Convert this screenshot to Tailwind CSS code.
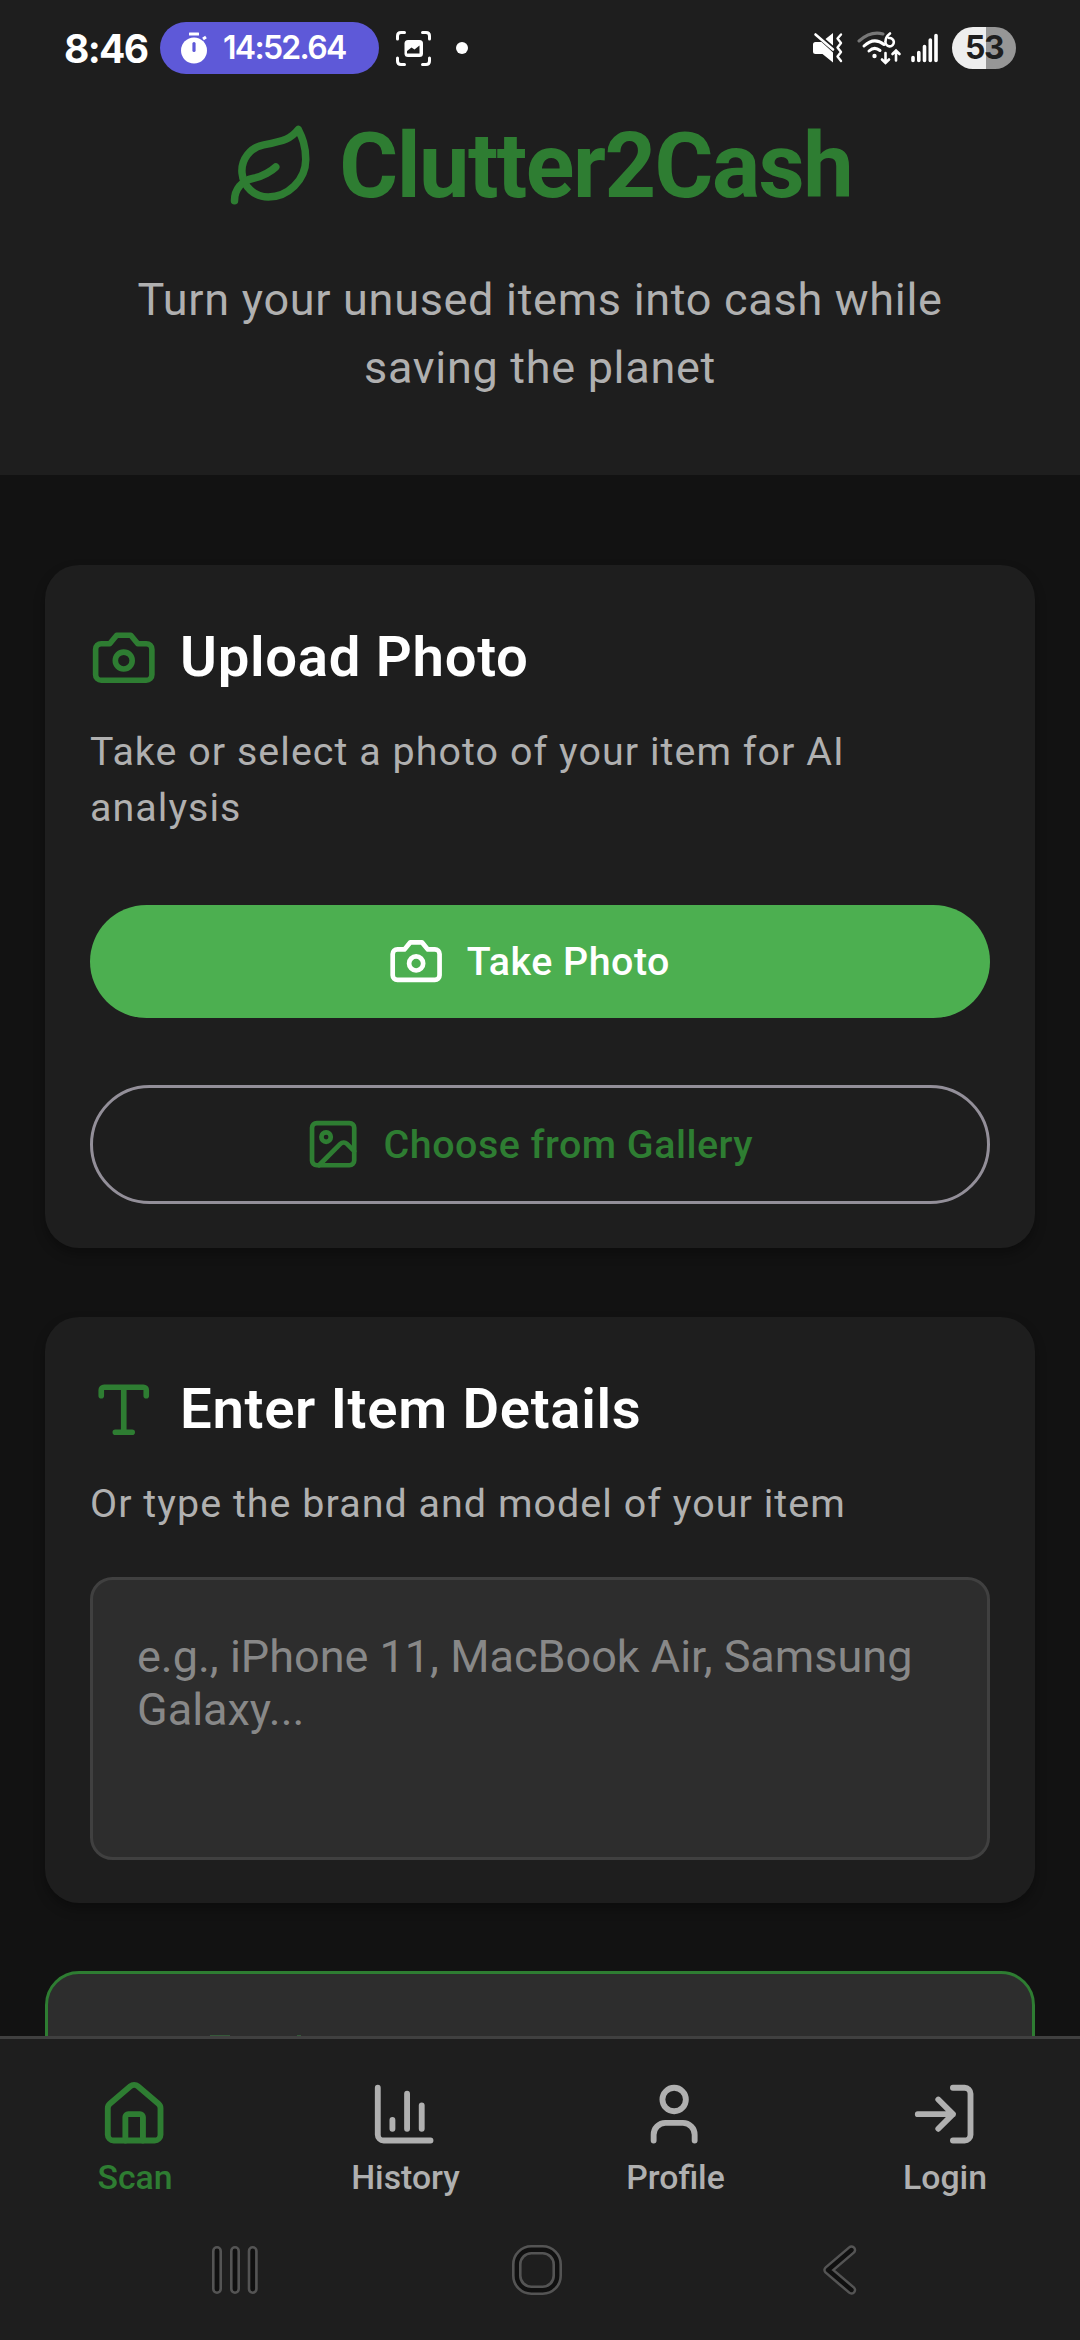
<!DOCTYPE html>
<html lang="en">
<head>
<meta charset="utf-8">
<title>Clutter2Cash</title>
<script src="https://cdn.jsdelivr.net/npm/@tailwindcss/browser@4"></script>
</head>
<body class="bg-[#121212]">
<div class="flex h-[2340px] w-[1080px] flex-col overflow-hidden bg-[#121212] font-['Roboto',sans-serif] text-[#b0b0b0]">

  <header class="flex h-[475px] shrink-0 flex-col items-center bg-[#1e1e1e]">
    <!-- Status bar -->
    <div class="flex h-[96px] w-full items-center pl-[64px] pr-[64px] font-['Inter',sans-serif] text-white">
      <span class="w-[96px] whitespace-nowrap text-[39px] font-bold leading-none tracking-[-1.7px]">8:46</span>
      <div class="flex h-[52px] w-[219px] items-center rounded-full bg-[#5e59d8] pl-[20px]">
        <svg class="h-[32px] w-[28px]" viewBox="0 0 28 32" fill="#fff"><circle cx="14" cy="18.500" r="13"/><rect x="9" y="0.500" width="10" height="3" rx="0.500"/><path d="M23 7l3-2" stroke="#fff" stroke-width="3"/><path d="M14 11.500v7" stroke="#5e59d8" stroke-width="3.200" stroke-linecap="round"/></svg>
        <span class="ml-[15px] whitespace-nowrap text-[32px] font-semibold leading-none tracking-[-1.7px]">14:52.64</span>
      </div>
      <svg class="ml-[17px] h-[35px] w-[35px]" viewBox="0 0 35 35" fill="none" stroke="#fff" stroke-width="3" stroke-linecap="round"><path d="M1.500 8V5q0-3.500 3.500-3.500H8.500M26.500 1.500H30q3.500 0 3.500 3.500v3M33.500 27v3q0 3.500-3.500 3.500h-3.500M8.500 33.500H5q-3.500 0-3.500-3.500v-3"/><rect x="8.500" y="9" width="18.500" height="17" rx="3.500" fill="#fff" stroke="none"/><path d="M11 22.500V20l4.500-3.500 3 2 5-4v8z" fill="#1e1e1e" stroke="none"/></svg>
      <span class="ml-[25px] h-[12px] w-[12px] rounded-full bg-white"></span>
      <svg class="ml-auto h-[32px] w-[30px]" viewBox="0 0 30 32"><path d="M2.500 10h6L20 20.500v10L9.500 22H2.500Q0 22 0 19.500V12.500Q0 10 2.500 10ZM20 1v12.500L12.500 7Z" fill="#fff"/><path d="M2.500 2.500L20 17.500" stroke="#fff" stroke-width="2.600" stroke-linecap="round"/><path d="M28 2.500l-3.500 4 3.500 4.500-3.500 4.500 3.500 4.500-3.500 4.500 3.500 4.500" fill="none" stroke="#fff" stroke-width="2.400" stroke-linecap="round" stroke-linejoin="round"/></svg>
      <svg class="ml-[14px] h-[34px] w-[45px]" viewBox="0 0 45 34" fill="none" stroke="#fff" stroke-width="3" stroke-linecap="round"><path d="M2 10Q14 -0.500 26 3" stroke="#777"/><path d="M7 15Q17 5.500 27 13.500M12 20Q17.500 15 23 19.500"/><circle cx="17.500" cy="25" r="2.200" fill="#fff" stroke="none"/><path d="M33 2.500Q28.500 6 28.500 10.500a4.200 4.200 0 1 0 3.500-3.500" stroke-width="2.600"/><path d="M28.500 22v10M25 28.500l3.500 3.500 3.500-3.500M39 29.500V20M35.500 23l3.500-3.500 3.500 3.500" stroke-width="2.600"/></svg>
      <svg class="ml-[9px] h-[30px] w-[28px]" viewBox="0 0 28 30" stroke="#fff" stroke-width="3.600" stroke-linecap="round"><path d="M2 24.500v3M7.800 19.500v8M13.500 13.500v14M19.300 7v20.500M25 2.500v25"/></svg>
      <div class="ml-[13px] flex h-[42px] w-[64px] items-center justify-center rounded-full bg-linear-to-r from-[#eeeeee] from-53% to-[#969696] to-53%">
        <span class="text-[32px] font-bold leading-none tracking-[-1.6px] text-[#1e1e1e]">53</span>
      </div>
    </div>
    <!-- App title -->
    <div class="mt-[26px] flex h-[90px] items-center gap-[22.500px] pr-[1px] text-[#2e7d32]">
      <svg class="h-[90px] w-[90px]" viewBox="0 0 24 24" fill="none" stroke="currentColor" stroke-width="2" stroke-linecap="round" stroke-linejoin="round"><path d="M11 20A7 7 0 0 1 9.800 6.100C15.500 5 17 4.480 19 2c1 2 2 4.180 2 8 0 5.500-4.780 10-10 10Z"/><path d="M2 21c0-3 1.850-5.360 5.080-6C9.500 14.520 12 13 13 12"/></svg>
      <h1 class="whitespace-nowrap text-[90px] font-bold leading-[90px] tracking-[-1.500px]">Clutter2Cash</h1>
    </div>
    <p class="mt-[54px] w-[900px] text-center text-[45px] leading-[67.500px] tracking-[0.700px]">Turn your unused items into cash while<br>saving the planet</p>
  </header>

  <main class="flex h-[1561px] shrink-0 flex-col overflow-hidden px-[45px] pt-[90px]">
    <section class="flex h-[683px] shrink-0 flex-col rounded-[34px] bg-[#1e1e1e] px-[45px] pt-[59px] shadow-[0_6px_12px_rgba(0,0,0,0.3)]">
      <div class="flex h-[67.500px] items-center gap-[22.500px]">
        <svg class="h-[67.500px] w-[67.500px] text-[#2e7d32]" viewBox="0 0 24 24" fill="none" stroke="currentColor" stroke-width="2" stroke-linecap="round" stroke-linejoin="round"><path d="M14.500 4h-5L7 7H4a2 2 0 0 0-2 2v9a2 2 0 0 0 2 2h16a2 2 0 0 0 2-2V9a2 2 0 0 0-2-2h-3l-2.500-3z"/><circle cx="12" cy="13" r="3"/></svg>
        <h2 class="text-[56.250px] font-semibold leading-[67px] tracking-[0.700px] text-white">Upload Photo</h2>
      </div>
      <p class="mt-[32px] text-[39.400px] leading-[56.250px] tracking-[1.050px]">Take or select a photo of your item for AI<br>analysis</p>
      <button class="mt-[69px] flex h-[113px] shrink-0 items-center justify-center gap-[22.500px] rounded-full bg-[#4caf50] pr-[22px] text-[39.400px] font-medium tracking-[0.500px] text-white">
        <svg class="h-[56.250px] w-[56.250px]" viewBox="0 0 24 24" fill="none" stroke="currentColor" stroke-width="2" stroke-linecap="round" stroke-linejoin="round"><path d="M14.500 4h-5L7 7H4a2 2 0 0 0-2 2v9a2 2 0 0 0 2 2h16a2 2 0 0 0 2-2V9a2 2 0 0 0-2-2h-3l-2.500-3z"/><circle cx="12" cy="13" r="3"/></svg>
        <span>Take Photo</span>
      </button>
      <button class="mt-[67px] flex h-[119px] shrink-0 items-center justify-center gap-[22.500px] rounded-full border-3 border-[#938f99] pr-[22px] text-[39.400px] font-medium tracking-[0.500px] text-[#2e7d32]">
        <svg class="h-[56.250px] w-[56.250px]" viewBox="0 0 24 24" fill="none" stroke="currentColor" stroke-width="2" stroke-linecap="round" stroke-linejoin="round"><rect x="3" y="3" width="18" height="18" rx="2"/><circle cx="9" cy="9" r="2"/><path d="m21 15-3.086-3.086a2 2 0 0 0-2.828 0L6 21"/></svg>
        <span>Choose from Gallery</span>
      </button>
    </section>

    <section class="mt-[69px] flex h-[586px] shrink-0 flex-col rounded-[34px] bg-[#1e1e1e] px-[45px] pt-[59px] shadow-[0_6px_12px_rgba(0,0,0,0.3)]">
      <div class="flex h-[67.500px] items-center gap-[22.500px]">
        <svg class="h-[67.500px] w-[67.500px] text-[#2e7d32]" viewBox="0 0 24 24" fill="none" stroke="currentColor" stroke-width="2" stroke-linecap="round" stroke-linejoin="round"><path d="M12 4v16M4 7V5a1 1 0 0 1 1-1h14a1 1 0 0 1 1 1v2M9 20h6"/></svg>
        <h2 class="text-[56.250px] font-semibold leading-[67px] tracking-[0.700px] text-white">Enter Item Details</h2>
      </div>
      <p class="mt-[32px] text-[39.400px] leading-[56.250px] tracking-[1.050px]">Or type the brand and model of your item</p>
      <div class="mt-[45px] h-[283px] rounded-[22.500px] border-3 border-[#404040] bg-[#2d2d2d] px-[44px] pt-[50px] text-[45px] leading-[53px] text-[#888888]">e.g., iPhone 11, MacBook Air, Samsung<br>Galaxy...</div>
    </section>

    <!-- Next card, mostly hidden behind the tab bar -->
    <section class="mt-[68px] flex h-[300px] shrink-0 items-start rounded-[34px] border-3 border-[#2e7d32] bg-[#2d2d2d] pl-[162px] pt-[61px]">
      <span class="h-px w-[20px] bg-[#35593a]"></span>
      <span class="ml-[67px] h-px w-[4px] bg-[#35593a]"></span>
    </section>
  </main>

  <nav class="grid h-[174px] shrink-0 grid-cols-4 border-t-3 border-[#404040] bg-[#1e1e1e] pt-[40px] text-[33.750px] font-medium">
    <div class="flex flex-col items-center text-[#2e7d32]">
      <svg class="mr-[2px] h-[70.300px] w-[70.300px]" viewBox="0 0 24 24" fill="none" stroke="currentColor" stroke-width="2" stroke-linecap="round" stroke-linejoin="round"><path d="M15 21v-8a1 1 0 0 0-1-1h-4a1 1 0 0 0-1 1v8"/><path d="M3 10a2 2 0 0 1 .709-1.528l7-5.999a2 2 0 0 1 2.582 0l7 5.999A2 2 0 0 1 21 10v9a2 2 0 0 1-2 2H5a2 2 0 0 1-2-2z"/></svg>
      <span class="mt-[9px] leading-[40px]">Scan</span>
    </div>
    <div class="flex flex-col items-center">
      <svg class="mr-[2px] h-[70.300px] w-[70.300px]" viewBox="0 0 24 24" fill="none" stroke="currentColor" stroke-width="2" stroke-linecap="round" stroke-linejoin="round"><path d="M3 3v16a2 2 0 0 0 2 2h16M18 17V9M13 17V5M8 17v-3"/></svg>
      <span class="mt-[9px] pl-[1px] leading-[40px]">History</span>
    </div>
    <div class="flex flex-col items-center">
      <svg class="mr-[2px] h-[70.300px] w-[70.300px]" viewBox="0 0 24 24" fill="none" stroke="currentColor" stroke-width="2" stroke-linecap="round" stroke-linejoin="round"><path d="M19 21v-2a4 4 0 0 0-4-4H9a4 4 0 0 0-4 4v2"/><circle cx="12" cy="7" r="4"/></svg>
      <span class="mt-[9px] pl-[1px] leading-[40px]">Profile</span>
    </div>
    <div class="flex flex-col items-center">
      <svg class="mr-[2px] h-[70.300px] w-[70.300px]" viewBox="0 0 24 24" fill="none" stroke="currentColor" stroke-width="2" stroke-linecap="round" stroke-linejoin="round"><path d="m10 17 5-5-5-5M15 12H3M15 3h4a2 2 0 0 1 2 2v14a2 2 0 0 1-2 2h-4"/></svg>
      <span class="mt-[9px] leading-[40px]">Login</span>
    </div>
  </nav>

  <!-- System navigation buttons -->
  <div class="flex h-[130px] shrink-0 items-start bg-[#1e1e1e] pl-[212px] pt-[35px]">
    <svg class="h-[50px] w-[46px]" viewBox="0 0 46 50" fill="#101010" stroke="#545454" stroke-width="2.600"><rect x="1.300" y="2.300" width="7.400" height="45.400" rx="3.700"/><rect x="19.300" y="2.300" width="7.400" height="45.400" rx="3.700"/><rect x="37" y="2.300" width="7.400" height="45.400" rx="3.700"/></svg>
    <svg class="ml-[254px] h-[50px] w-[50px]" viewBox="0 0 50 50" fill="#101010" stroke="#545454" stroke-width="2.600"><rect x="1.300" y="1.300" width="47.400" height="47.400" rx="18"/><rect x="8.300" y="8.300" width="33.400" height="33.400" rx="11" fill="#1e1e1e"/></svg>
    <svg class="ml-[261px] h-[50px] w-[34px]" viewBox="0 0 34 50" fill="none" stroke-linecap="round" stroke-linejoin="round"><path d="M28.500 5L5 25l23.500 20" stroke="#545454" stroke-width="9.500"/><path d="M28.500 5L5 25l23.500 20" stroke="#101010" stroke-width="4.400"/></svg>
  </div>
</div>
</body>
</html>
